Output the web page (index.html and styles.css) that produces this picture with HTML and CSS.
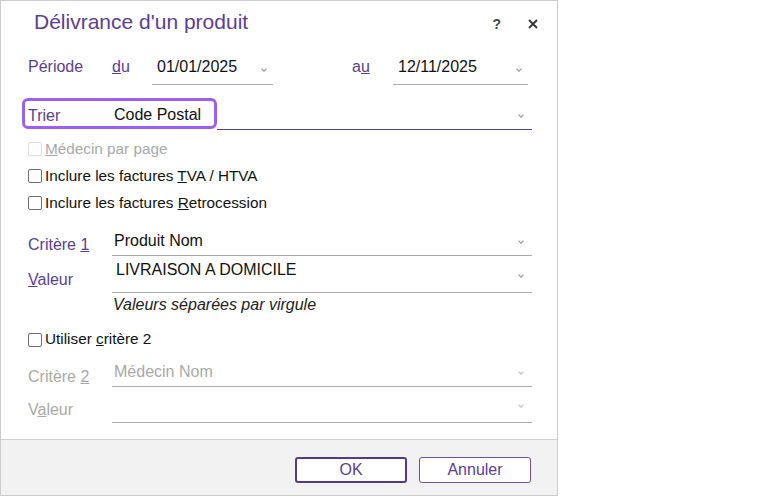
FILE: index.html
```html
<!DOCTYPE html>
<html lang="fr">
<head>
<meta charset="utf-8">
<title>Délivrance d'un produit</title>
<link rel="stylesheet" href="styles.css">
</head>
<body>
<div class="dialog">
  <div class="header">
    <div class="title">Délivrance d'un produit</div>
    <div class="help">?</div>
    <svg class="close" width="10" height="10" viewBox="0 0 10 10"><path d="M1 1L9 9M9 1L1 9" stroke="#333" stroke-width="1.8"/></svg>
  </div>

  <div class="form">
    <div class="row row-periode">
      <div class="lbl lbl-w pt7">Période</div>
      <div class="lbl lbl-du pt7"><u>d</u>u</div>
      <div class="field field-du">
        <span class="val val-date">01/01/2025</span>
        <svg class="chev chev-date" width="6" height="4" viewBox="0 0 6 4"><path d="M0.5 0.7L3 3.2L5.5 0.7" fill="none" stroke="#9a9a9a" stroke-width="1.2"/></svg>
      </div>
      <div class="lbl lbl-au pt7">a<u>u</u></div>
      <div class="field field-au">
        <span class="val val-date">12/11/2025</span>
        <svg class="chev chev-date" width="6" height="4" viewBox="0 0 6 4"><path d="M0.5 0.7L3 3.2L5.5 0.7" fill="none" stroke="#9a9a9a" stroke-width="1.2"/></svg>
      </div>
    </div>

    <div class="row row-trier">
      <div class="focus">
        <span class="lbl lbl-trier">Trier</span>
        <span class="val val-trier">Code Postal</span>
      </div>
      <div class="field field-trier">
        <svg class="chev chev-trier" width="6" height="4" viewBox="0 0 6 4"><path d="M0.5 0.7L3 3.2L5.5 0.7" fill="none" stroke="#9a9a9a" stroke-width="1.2"/></svg>
      </div>
    </div>

    <div class="checks">
      <div class="check disabled"><span class="box"></span><span><u>M</u>édecin par page</span></div>
      <div class="check"><span class="box"></span><span>Inclure les factures <u>T</u>VA / HTVA</span></div>
      <div class="check"><span class="box"></span><span>Inclure les factures <u>R</u>etrocession</span></div>
    </div>

    <div class="row row-c1">
      <div class="lbl lbl-w pt10">Critère <u>1</u></div>
      <div class="field">
        <span class="val pt6">Produit Nom</span>
        <svg class="chev mt14" width="6" height="4" viewBox="0 0 6 4"><path d="M0.5 0.7L3 3.2L5.5 0.7" fill="none" stroke="#9a9a9a" stroke-width="1.2"/></svg>
      </div>
    </div>

    <div class="row row-v1">
      <div class="lbl lbl-w pt15"><u>V</u>aleur</div>
      <div class="field">
        <span class="val val-input pt5">LIVRAISON A DOMICILE</span>
        <svg class="chev mt18" width="6" height="4" viewBox="0 0 6 4"><path d="M0.5 0.7L3 3.2L5.5 0.7" fill="none" stroke="#9a9a9a" stroke-width="1.2"/></svg>
      </div>
    </div>

    <div class="hint">Valeurs séparées par virgule</div>

    <div class="check check-c2"><span class="box"></span><span>Utiliser <u>c</u>ritère 2</span></div>

    <div class="row row-c2">
      <div class="lbl lbl-w lbl-dis pt11">Critère <u>2</u></div>
      <div class="field">
        <span class="val val-dis pt6">Médecin Nom</span>
        <svg class="chev mt14" width="6" height="4" viewBox="0 0 6 4"><path d="M0.5 0.7L3 3.2L5.5 0.7" fill="none" stroke="#c2c2c2" stroke-width="1.2"/></svg>
      </div>
    </div>

    <div class="row row-v2">
      <div class="lbl lbl-w lbl-dis pt14">V<u>a</u>leur</div>
      <div class="field">
        <svg class="chev mt17" width="6" height="4" viewBox="0 0 6 4"><path d="M0.5 0.7L3 3.2L5.5 0.7" fill="none" stroke="#c2c2c2" stroke-width="1.2"/></svg>
      </div>
    </div>
  </div>

  <div class="footer">
    <button class="btn btn-primary">OK</button>
    <button class="btn">Annuler</button>
  </div>
</div>
</body>
</html>
```

FILE: styles.css
```css
html, body {
  margin: 0;
  padding: 0;
  background: #ffffff;
}

body {
  font-family: "Liberation Sans", Arial, sans-serif;
  font-size: 16px;
  line-height: 18px;
  color: #111;
}

.dialog {
  width: 558px;
  height: 496px;
  box-sizing: border-box;
  border: 1px solid #cccccc;
  display: flex;
  flex-direction: column;
  background: #fff;
}

/* header */
.header {
  height: 42px;
  display: flex;
  align-items: center;
  padding: 0 19px 0 33px;
}

.title {
  flex: 1;
  font-size: 21px;
  line-height: 24px;
  color: #5b3e90;
}

.help {
  font-size: 14px;
  font-weight: bold;
  color: #444;
  margin-right: 27px;
  margin-top: 3px;
}

.close {
  display: block;
  margin-top: 3px;
}

/* form */
.form {
  flex: 1;
  padding: 8px 25px 0 27px;
}

.row {
  display: flex;
}

.lbl {
  color: #5b3e90;
}

.lbl-w {
  width: 84px;
  flex: none;
}

.lbl-dis {
  color: #a9a9a9;
}

.field {
  flex: 1;
  display: flex;
  align-items: flex-start;
  box-sizing: border-box;
  border-bottom: 1px solid #aaaaaa;
}

.val {
  padding-left: 2px;
  color: #111;
  white-space: nowrap;
}

.val-input {
  padding-left: 4px;
}

.val-dis {
  color: #a9a9a9;
}

.chev {
  display: block;
  margin-left: auto;
  margin-right: 8px;
  flex: none;
}

.pt5 { padding-top: 5px; }
.pt6 { padding-top: 6px; }
.pt7 { padding-top: 7px; }
.pt10 { padding-top: 10px; }
.pt11 { padding-top: 11px; }
.pt14 { padding-top: 14px; }
.pt15 { padding-top: 15px; }
.mt14 { margin-top: 14px; }
.mt17 { margin-top: 17px; }
.mt18 { margin-top: 18px; }

/* période */
.row-periode {
  height: 34px;
}

.lbl-du {
  width: 40px;
  flex: none;
}

.field-du {
  flex: none;
  width: 121px;
}

.lbl-au {
  width: 41px;
  flex: none;
  margin-left: 79px;
}

.field-au {
  flex: none;
  width: 135px;
}

.val-date {
  padding-left: 5px;
  padding-top: 7px;
}

.chev-date {
  margin-top: 17px;
  margin-right: 6px;
}

/* trier */
.row-trier {
  height: 32px;
  margin-top: 13px;
  align-items: flex-start;
}

.focus {
  width: 195px;
  height: 31px;
  box-sizing: border-box;
  margin-left: -6px;
  border: 3px solid #9e5ef3;
  border-radius: 6px;
  padding-left: 3px;
  display: flex;
  align-items: flex-start;
  flex: none;
}

.lbl-trier {
  width: 86px;
  padding-top: 6px;
}

.val-trier {
  padding-left: 0;
  padding-top: 5px;
}

.field-trier {
  height: 32px;
  border-bottom-color: #5b3e90;
}

.chev-trier {
  margin-top: 16px;
}

/* checkboxes */
.checks {
  margin-top: 5px;
}

.check {
  height: 27px;
  display: flex;
  align-items: center;
  color: #111;
  font-size: 15.3px;
}

.box {
  width: 14px;
  height: 14px;
  box-sizing: border-box;
  border: 1px solid #6f6f6f;
  border-radius: 2px;
  margin-right: 3px;
  margin-top: 1px;
  flex: none;
  background: #fff;
}

.check.disabled {
  color: #a9a9a9;
}

.check.disabled .box {
  border-color: #dddddd;
}

/* criteria */
.row-c1 {
  height: 30px;
  margin-top: 10px;
}

.row-v1 {
  height: 37px;
}

.hint {
  height: 25px;
  box-sizing: border-box;
  padding-top: 3px;
  margin-left: 85px;
  font-style: italic;
  color: #222;
}

.check-c2 {
  margin-top: 8px;
  height: 26px;
}

.row-c2 {
  height: 30px;
  margin-top: 5px;
}

.row-v2 {
  height: 36px;
}

/* footer */
.footer {
  height: 56px;
  box-sizing: border-box;
  border-top: 1px solid #d2d2d2;
  background: #f2f2f2;
  display: flex;
  justify-content: flex-end;
  align-items: flex-start;
  gap: 12px;
  padding: 17px 26px 0 0;
}

.btn {
  width: 112px;
  height: 26px;
  box-sizing: border-box;
  border: 1px solid #6b52a3;
  border-radius: 3px;
  background: #fff;
  color: #5b3e90;
  font-family: "Liberation Sans", Arial, sans-serif;
  font-size: 16px;
  line-height: 18px;
  padding: 0;
}

.btn-primary {
  border: 2px solid #553a8c;
}
```
